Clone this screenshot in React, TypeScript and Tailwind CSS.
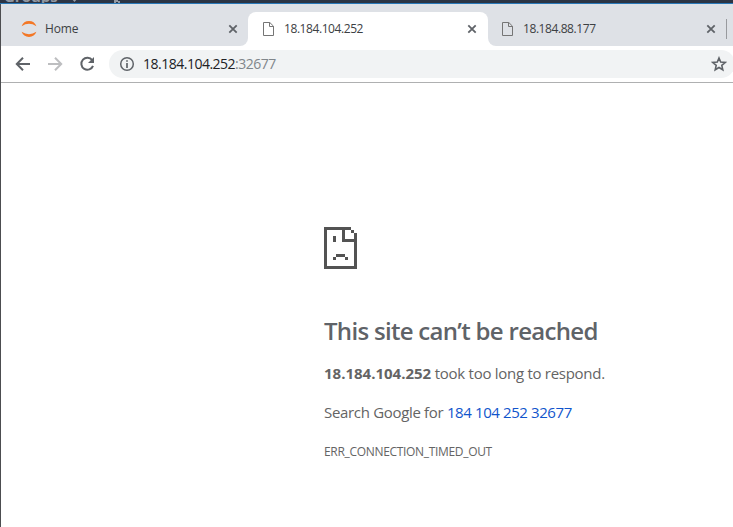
import React from "react";

const FONT = "font-['Segoe_UI','Open_Sans','Noto_Sans',sans-serif]";

function Close() {
  return (
    <svg width="10" height="10" viewBox="0 0 10 10" className="shrink-0">
      <path d="M1.3 1.3 8.7 8.7M8.7 1.3 1.3 8.7" stroke="#5f6368" strokeWidth="1.8" />
    </svg>
  );
}

function Page() {
  return (
    <svg width="11" height="14" viewBox="0 0 11 14" className="shrink-0">
      <path d="M.5.5H6.8L10.5 4.2V13.5H.5ZM6.5.5V4.5H10.5" fill="none" stroke="#757575" />
    </svg>
  );
}

function SadPage() {
  return (
    <svg width="33" height="42" viewBox="0 0 11 14" shapeRendering="crispEdges" className="block">
      <path
        fill="#535353"
        d="M0 0H9V1H7V4H11V5H6V1H1V13H10V5H11V14H0ZM9 1H10V2H9ZM10 2H11V5H10ZM3 3H4V5H3ZM4 9H7V10H4ZM3 10H4V11H3ZM7 10H8V11H7Z"
      />
    </svg>
  );
}

export default function App() {
  return (
    <div className={`flex h-[527px] w-[733px] flex-col overflow-hidden bg-white ${FONT}`}>
      <div className="h-[3px] shrink-0 overflow-hidden bg-[#2b3444]">
        <div className="-mt-[12px] flex h-4 items-start pl-1 text-[15px] leading-4 font-bold text-[#9298a2]">
          <span className="w-[66px]">Groups</span>
          <svg width="9" height="16" viewBox="0 0 9 16">
            <path d="M1 10H8L4.5 14Z" fill="#9298a2" />
          </svg>
          <svg width="9" height="16" viewBox="0 0 9 16" className="ml-[33px]">
            <path d="M2 16V10H6V13H8V16H6V14H4V16Z" fill="#9298a2" />
          </svg>
        </div>
      </div>
      <div className="h-px shrink-0 bg-[#2878b8]" />
      <div className="flex min-h-0 flex-1 flex-col border-l border-[#4c4d50]">
        <div className="flex h-[42px] shrink-0 bg-white text-[12px] text-[#3c4043]">
          <div className="flex w-[247px] items-center rounded-br-[8px] bg-[#dee1e6] pt-2 pr-[10px] pl-5">
            <svg width="16" height="16" viewBox="0 0 16 16" className="shrink-0">
              <path d="M.6 5.2A7.9 7.9 0 0 1 15.4 5.2Q8 .4.6 5.2ZM.6 10.8A7.9 7.9 0 0 0 15.4 10.8Q8 15.6.6 10.8Z" fill="#f37726" />
            </svg>
            <span className="ml-2 flex-1 tracking-[-0.15px]">Home</span>
            <Close />
          </div>
          <div className="w-[240px] bg-[#dee1e6] pt-2">
            <div className="flex h-[34px] items-center rounded-t-[8px] bg-white pr-[11px] pl-[15px]">
              <Page />
              <span className="ml-[10px] flex-1 tracking-[-0.42px]">18.184.104.252</span>
              <Close />
            </div>
          </div>
          <div className="flex w-[245px] items-center rounded-bl-[8px] bg-[#dee1e6] pt-2 pl-[14px]">
            <Page />
            <span className="ml-[10px] w-[183px] tracking-[-0.42px]">18.184.88.177</span>
            <Close />
            <div className="ml-[10px] h-5 w-px bg-[#989a9e]" />
          </div>
        </div>
        <div className="flex h-[37px] shrink-0 items-center border-b border-[#afb0b1] pl-[14px]">
          <svg width="16" height="16" viewBox="0 0 16 16" className="shrink-0">
            <path d="M15 8H2M8 1.8 1.8 8 8 14.2" fill="none" stroke="#5f6368" strokeWidth="2" />
          </svg>
          <svg width="16" height="16" viewBox="0 0 16 16" className="ml-4 shrink-0">
            <path d="M1 8H14M8 1.8 14.2 8 8 14.2" fill="none" stroke="#bdbec0" strokeWidth="2" />
          </svg>
          <svg width="16" height="16" viewBox="0 0 16 16" className="ml-4 shrink-0">
            <path d="M13.2 4.2A6 6 0 1 0 14 9.8" fill="none" stroke="#5f6368" strokeWidth="2" />
            <path d="M15 1V7H9Z" fill="#5f6368" />
          </svg>
          <div className="ml-[14px] flex h-7 w-[626px] shrink-0 items-center rounded-full bg-[#f1f3f4] pl-[10px]">
            <svg width="16" height="16" viewBox="0 0 16 16" className="shrink-0">
              <circle cx="8" cy="8" r="6.3" fill="none" stroke="#5f6368" strokeWidth="1.5" />
              <path d="M8 4.2V5.8M8 7V12" stroke="#5f6368" strokeWidth="1.7" />
            </svg>
            <span className="ml-2 w-[568px] pb-px text-[14px] tracking-[-0.5px] text-[#202124]">
              18.184.104.252<span className="text-[#80868b]">:32677</span>
            </span>
            <svg width="16" height="16" viewBox="0 0 16 16" className="shrink-0">
              <path d="M8 2 9.7 6.1 14.2 6.5 10.8 9.4 11.8 13.8 8 11.5 4.2 13.8 5.2 9.4 1.8 6.5 6.3 6.1Z" fill="none" stroke="#5f6368" strokeWidth="1.6" />
            </svg>
          </div>
        </div>
        <main className="pt-36 pl-[323px] text-[15px] whitespace-nowrap text-[#646464]">
          <SadPage />
          <h1 className="mt-[47px] text-[24px] leading-[30px] font-semibold tracking-[-0.7px] text-[#5f6368]">
            This site can’t be reached
          </h1>
          <p className="mt-4 leading-[22px] tracking-[-0.28px]">
            <b className="tracking-normal">18.184.104.252</b> took too long to respond.
          </p>
          <p className="mt-[17px] leading-[22px] tracking-[-0.32px]">
            Search Google for <a className="tracking-[-0.4px] text-[#1155cc]">184 104 252 32677</a>
          </p>
          <p className="mt-[19px] text-[12px] leading-5 tracking-[-0.32px]">ERR_CONNECTION_TIMED_OUT</p>
        </main>
      </div>
    </div>
  );
}
